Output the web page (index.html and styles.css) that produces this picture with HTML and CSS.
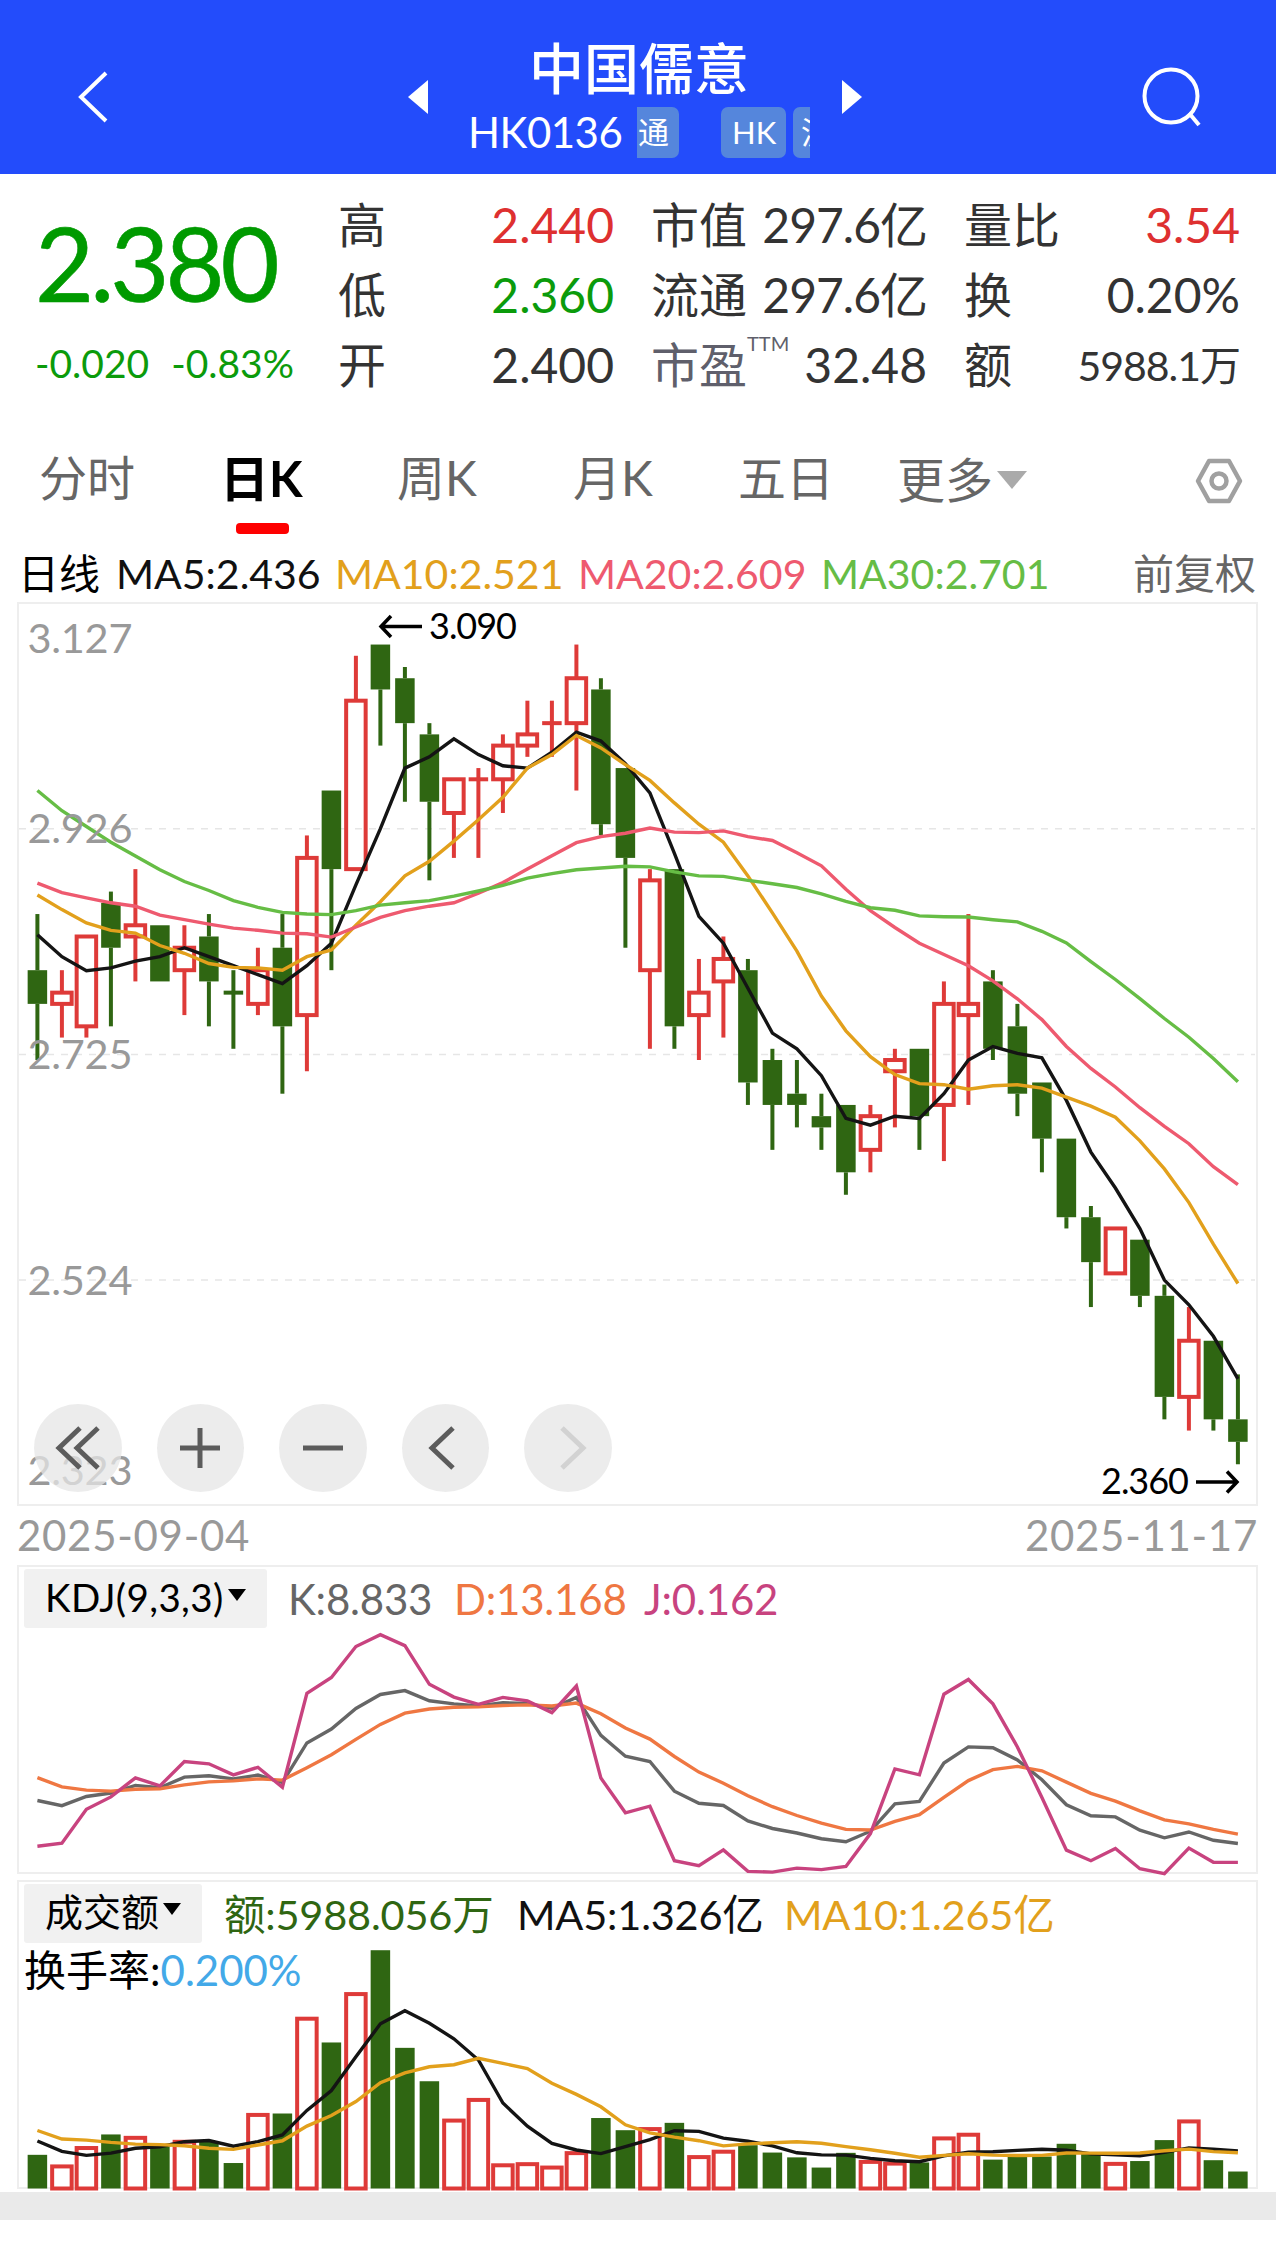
FILE: index.html
```html
<!DOCTYPE html>
<html lang="zh-CN">
<head>
    <meta charset="UTF-8">
    <meta name="viewport" content="width=device-width, initial-scale=1.0">
    <title>中国儒意 HK0136</title>
    <link rel="stylesheet" href="styles.css">
</head>
<body>
    <header class="topbar">
        <svg class="back" width="30" height="52" viewBox="0 0 30 52"><path d="M28 2 L3 26 L28 50"/></svg>
        <svg class="prev" width="20" height="34" viewBox="0 0 20 34"><path d="M20 0 L0 17 L20 34 Z"/></svg>
        <div class="stock">
            <h1>中国儒意</h1>
            <div class="code">
                <span class="num">HK0136</span>
                <div class="tags">
                    <span class="tag tag-cut">通</span>
                    <span class="tag tag-hk">HK</span>
                    <span class="tag tag-hu">沪</span>
                </div>
            </div>
        </div>
        <svg class="next" width="20" height="34" viewBox="0 0 20 34"><path d="M0 0 L20 17 L0 34 Z"/></svg>
        <svg class="search" width="60" height="60" viewBox="0 0 60 60"><circle cx="29" cy="29" r="26.5"/><path d="M47 46 L57 58"/></svg>
    </header>

    <section class="quote">
        <div class="price">
            <div class="last">2.380</div>
            <div class="change"><span>-0.020</span><span>-0.83%</span></div>
        </div>
        <dl class="stats">
            <dt>高</dt><dd class="up">2.440</dd>
            <dt>市值</dt><dd class="tight">297.6亿</dd>
            <dt>量比</dt><dd class="up">3.54</dd>
            <dt>低</dt><dd class="down">2.360</dd>
            <dt>流通</dt><dd class="tight">297.6亿</dd>
            <dt>换</dt><dd>0.20%</dd>
            <dt>开</dt><dd>2.400</dd>
            <dt class="pe">市盈<sup>TTM</sup></dt><dd>32.48</dd>
            <dt>额</dt><dd class="small">5988.1万</dd>
        </dl>
    </section>

    <nav class="tabs">
        <a>分时</a>
        <a class="active">日K</a>
        <a>周K</a>
        <a>月K</a>
        <a>五日</a>
        <a class="more">更多<i></i></a>
        <svg class="setting" width="48" height="46" viewBox="0 0 48 46"><path d="M14 3 H34 L45 23 L34 43 H14 L3 23 Z"/><circle cx="24" cy="23" r="7.5"/></svg>
    </nav>

    <div class="legend ma">
        <span>日线</span>
        <span class="ma5">MA5:2.436</span>
        <span class="ma10">MA10:2.521</span>
        <span class="ma20">MA20:2.609</span>
        <span class="ma30">MA30:2.701</span>
        <span class="adjust">前复权</span>
    </div>

    <div class="panel kline">
        <svg id="kline" width="1240" height="904"></svg>
        <div class="tools">
            <button><svg width="44" height="44" viewBox="0 0 44 44"><path d="M24 2 L3 22 L24 42 M42 2 L21 22 L42 42"/></svg></button>
            <button><svg width="44" height="44" viewBox="0 0 44 44"><path d="M22 2 V42 M2 22 H42"/></svg></button>
            <button><svg width="44" height="44" viewBox="0 0 44 44"><path d="M2 22 H42"/></svg></button>
            <button><svg width="44" height="44" viewBox="0 0 44 44"><path d="M30 2 L9 22 L30 42"/></svg></button>
            <button class="off"><svg width="44" height="44" viewBox="0 0 44 44"><path d="M16 2 L37 22 L16 42"/></svg></button>
        </div>
    </div>
    <div class="dates"><span>2025-09-04</span><span>2025-11-17</span></div>

    <div class="panel kdj">
        <div class="legend">
            <button class="pick">KDJ(9,3,3)<i></i></button>
            <span class="k">K:8.833</span>
            <span class="d">D:13.168</span>
            <span class="j">J:0.162</span>
        </div>
        <svg id="kdj" class="under" width="1240" height="309"></svg>
    </div>

    <div class="panel vol">
        <div class="legend">
            <button class="pick">成交额<i></i></button>
            <span class="amount">额:5988.056万</span>
            <span class="ma5">MA5:1.326亿</span>
            <span class="ma10">MA10:1.265亿</span>
        </div>
        <div class="turnover">换手率:<span>0.200%</span></div>
        <svg id="vol" class="under" width="1240" height="309"></svg>
    </div>
    <div class="band"></div>

    <script src="chart.js"></script>
</body>
</html>
```
FILE: styles.css
```css
*{
    margin: 0;
    padding: 0;
    box-sizing: border-box;
}
body{
    width: 1276px;
    background-color: #fff;
    color: #333;
    font-family: Lato, "Noto Sans CJK SC", sans-serif;
    font-size: 48px;
    line-height: 1;
    white-space: nowrap;
}
button{
    border: none;
    font: inherit;
    cursor: pointer;
}
svg{
    display: block;
    overflow: visible;
}

/* header */
.topbar{
    display: flex;
    align-items: center;
    height: 174px;
    padding: 20px 74px 0 78px;
    background-color: #234cfb;
    color: #fff;
}
.topbar svg{
    fill: none;
    stroke: #fff;
    stroke-width: 4;
}
.topbar .prev, .topbar .next{
    fill: #fff;
    stroke: none;
}
.prev{
    margin-left: 300px;
}
.stock{
    width: 414px;
    height: 134px;
    padding: 8px 32px 0 40px;
}
.stock h1{
    font-size: 55px;
    font-weight: 500;
    line-height: 58px;
    margin-top: 1px;
    text-align: center;
}
.code{
    display: flex;
    align-items: center;
    margin-top: 9px;
    height: 52px;
}
.code .num{
    flex: none;
    width: 169px;
    font-size: 42px;
    letter-spacing: -0.5px;
}
.tags{
    display: flex;
    flex: none;
    width: 173px;
    overflow: hidden;
}
.tag{
    flex: none;
    height: 51px;
    line-height: 50px;
    padding: 0 11px;
    border-radius: 7px;
    background-color: #5586dc;
    font-size: 31px;
}
.tag-cut{
    width: 42px;
    padding: 0 1px;
    border-radius: 0 7px 7px 0;
}
.tag-hk{
    width: 65px;
    margin: 0 7px 0 42px;
}
.tag-hu{
    padding-left: 8px;
}
.search{
    margin-left: auto;
}

/* quote */
.quote{
    display: flex;
    height: 246px;
    padding-top: 17px;
}
.price{
    width: 338px;
    padding: 21px 0 0 35px;
}
.last{
    font-size: 102px;
    letter-spacing: -4px;
    color: #009a00;
    -webkit-text-stroke: 0.6px #009a00;
}
.change{
    display: flex;
    gap: 22px;
    margin-top: 30px;
    font-size: 39px;
    color: #0b9b0b;
}
.stats{
    display: grid;
    grid-template-columns: 100px 176px 134px 179px 135px 178px;
    grid-auto-rows: 70px;
    line-height: 68px;
}
.stats dt:nth-of-type(3n+2){
    padding-left: 37px;
}
.stats dt:nth-of-type(3n){
    padding-left: 37px;
}
.stats dd{
    display: flex;
    justify-content: flex-end;
}
.up{
    color: #de3030;
}
.down{
    color: #0b9b0b;
}
.stats .tight{
    letter-spacing: -1px;
}
.stats .small{
    font-size: 41px;
    letter-spacing: -1px;
    line-height: 70px;
}
.pe{
    color: #5f5f6b;
}
.pe sup{
    font-size: 20px;
    line-height: 0;
    vertical-align: 32px;
}

/* tabs */
.tabs{
    display: grid;
    grid-template-columns: 185px 173px 176px 165px 159px 297px 48px;
    height: 120px;
    padding-left: 39px;
    line-height: 116px;
    color: #666;
}
.active{
    position: relative;
    left: -4px;
    font-weight: 700;
    font-size: 49px;
    color: #000;
}
.active::after{
    content: "";
    position: absolute;
    left: 16px;
    top: 103px;
    width: 53px;
    height: 11px;
    border-radius: 4px;
    background-color: #fe0000;
}
.more{
    display: flex;
    align-items: center;
    gap: 4px;
}
.more i{
    border: 15px solid transparent;
    border-top: 18px solid #aaa;
    border-bottom: none;
}
.setting{
    margin: 38px 0 0 1px;
    fill: none;
    stroke: #a0a0a0;
    stroke-width: 4.5;
    stroke-linejoin: round;
}

/* legends */
.legend{
    display: grid;
    font-size: 42px;
}
.ma{
    grid-template-columns: 98px 219px 243px 243px 300px auto;
    height: 62px;
    padding-left: 18px;
    line-height: 68px;
    color: #000;
    font-size: 41px;
}
.adjust{
    color: #666;
    padding-left: 12px;
}
.ma5{ color: #111; }
.ma10{ color: #e2a01c; }
.ma20{ color: #ee5a6f; }
.ma30{ color: #66bd45; }
.k{ color: #666; }
.d{ color: #ef7742; }
.j{ color: #c8437f; }
.amount{ color: #2f6612; }

.panel{
    position: relative;
    width: 1241px;
    margin-left: 17px;
    box-shadow: inset 0 0 0 2px #eee;
}
.tools{
    position: absolute;
    left: 17px;
    bottom: 14px;
    display: flex;
    gap: 35px;
}
.tools button{
    display: flex;
    align-items: center;
    justify-content: center;
    width: 87.5px;
    height: 88px;
    border-radius: 50%;
    background-color: rgba(230, 230, 230, 0.75);
}
.tools path{
    fill: none;
    stroke: #5c5c5c;
    stroke-width: 5;
}
.tools .off path{
    stroke: #d2d2d2;
}
.dates{
    display: flex;
    justify-content: space-between;
    height: 59px;
    padding: 0 18px 0 17px;
    font-size: 42px;
    line-height: 59px;
    letter-spacing: 0.7px;
    color: #999;
}
.kdj, .vol{
    height: 309px;
    padding: 4px 0 0 7px;
}
.kdj{
    margin-bottom: 6px;
}
.kdj .legend{
    grid-template-columns: 264px 166px 190px auto;
    line-height: 61px;
    letter-spacing: -0.2px;
}
.vol .legend{
    grid-template-columns: 200px 293px 267px auto;
    line-height: 61px;
    font-size: 41.5px;
    letter-spacing: -0.2px;
}
.pick{
    display: flex;
    align-items: center;
    justify-content: space-between;
    width: 243px;
    height: 59px;
    padding: 0 21px 2px 21px;
    border-radius: 3px;
    background-color: #f1f1f1;
    color: #000;
    font-size: 38.5px;
    letter-spacing: 0.4px;
}
.vol .pick{
    width: 178px;
    font-size: 38px;
    letter-spacing: 0;
    padding-bottom: 4px;
}
.pick i{
    margin-bottom: 6px;
    border: 9px solid transparent;
    border-top: 12px solid #000;
    border-bottom: none;
}
.turnover{
    font-size: 42px;
    line-height: 50px;
    color: #000;
}
.turnover span{
    color: #43a9e8;
}
.under{
    position: absolute;
    left: 0;
    top: 0;
    pointer-events: none;
}
.band{
    height: 28px;
    margin-top: 3px;
    background-color: #eaeaea;
}

/* chart shapes */
.grid{
    stroke: #e6e6e6;
    stroke-width: 1.5;
    stroke-dasharray: 7 7;
}
.rise{
    fill: none;
    stroke: #de3a38;
    stroke-width: 4;
}
.fall{
    fill: #2f6612;
    stroke: none;
}
.wick-fall{
    stroke: #2f6612;
    stroke-width: 4;
}
.curve{
    fill: none;
    stroke-width: 3.4;
}
.axis{
    fill: #999;
    font-size: 41.5px;
}
.mark{
    fill: #000;
    font-size: 36px;
}
.arrow{
    fill: none;
    stroke: #000;
    stroke-width: 3.5;
}
```
FILE: chart.js
```js
// open, close, high, low, amount (million)
const days = [
    [2.80, 2.77, 2.85, 2.72, 119], [2.77, 2.78, 2.80, 2.74, 78], [2.75, 2.83, 2.83, 2.74, 143],
    [2.86, 2.82, 2.87, 2.75, 191], [2.83, 2.84, 2.89, 2.79, 179], [2.84, 2.79, 2.84, 2.79, 148],
    [2.80, 2.82, 2.84, 2.76, 165], [2.83, 2.79, 2.85, 2.75, 165], [2.78, 2.78, 2.80, 2.73, 90, 'fall'],
    [2.77, 2.80, 2.82, 2.76, 260], [2.82, 2.75, 2.85, 2.69, 265], [2.76, 2.90, 2.92, 2.71, 600],
    [2.96, 2.89, 2.96, 2.80, 516], [2.89, 3.04, 3.08, 2.89, 687], [3.09, 3.05, 3.09, 3.00, 842],
    [3.06, 3.02, 3.07, 2.95, 497], [3.01, 2.95, 3.02, 2.88, 379], [2.94, 2.97, 2.97, 2.90, 240],
    [2.97, 2.97, 2.98, 2.90, 313], [2.97, 3.00, 3.01, 2.94, 82], [3.00, 3.01, 3.04, 2.99, 86],
    [3.02, 3.02, 3.04, 2.99, 74], [3.02, 3.06, 3.09, 2.96, 125], [3.05, 2.93, 3.06, 2.92, 249],
    [2.98, 2.90, 2.98, 2.82, 206], [2.80, 2.88, 2.89, 2.73, 210], [2.89, 2.75, 2.89, 2.73, 232],
    [2.76, 2.78, 2.81, 2.72, 111], [2.79, 2.81, 2.83, 2.74, 130], [2.80, 2.70, 2.81, 2.68, 153],
    [2.72, 2.68, 2.73, 2.64, 127], [2.69, 2.68, 2.72, 2.66, 110], [2.67, 2.66, 2.69, 2.64, 74],
    [2.68, 2.62, 2.68, 2.60, 126], [2.64, 2.67, 2.68, 2.62, 94], [2.71, 2.72, 2.73, 2.66, 88],
    [2.73, 2.67, 2.73, 2.64, 92], [2.68, 2.77, 2.79, 2.63, 177], [2.76, 2.77, 2.85, 2.68, 190],
    [2.79, 2.73, 2.80, 2.72, 102], [2.75, 2.69, 2.77, 2.67, 113], [2.70, 2.65, 2.70, 2.62, 113],
    [2.65, 2.58, 2.65, 2.57, 158], [2.58, 2.54, 2.59, 2.50, 125], [2.53, 2.57, 2.57, 2.53, 87],
    [2.56, 2.51, 2.56, 2.50, 97], [2.51, 2.42, 2.52, 2.40, 171], [2.42, 2.47, 2.50, 2.39, 237],
    [2.47, 2.40, 2.47, 2.39, 100], [2.40, 2.38, 2.44, 2.36, 60]
]
const STEP = 24.5
const BODY = 19.5
const close = days.map(d => d[1])
const amount = days.map(d => d[4])
const px = i => 20.4 + i * STEP
const isRise = d => d[5] !== 'fall' && d[1] >= d[0]

// head = averages of the first days, whose window starts before the chart
function average(list, n, head) {
    return list.map((v, i) => i < head.length ? head[i]
        : list.slice(i - n + 1, i + 1).reduce((a, b) => a + b) / n)
}
function curve(list, y, color) {
    const points = list.map((v, i) => px(i).toFixed(1) + ',' + y(v).toFixed(1)).join(' ')
    return `<polyline class="curve" stroke="${color}" points="${points}"/>`
}
function vline(cls, x, y1, y2) {
    return `<line class="${cls}" x1="${x}" x2="${x}" y1="${y1}" y2="${y2}"/>`
}

function drawKline() {
    const y = p => 1 + (3.127 - p) * 1122.9
    let s = ''
    for (const p of [2.926, 2.725, 2.524]) {
        s += `<line class="grid" x1="2" x2="1238" y1="${y(p)}" y2="${y(p)}"/>`
    }
    days.forEach((d, i) => {
        const x = px(i)
        const top = y(Math.max(d[0], d[1]))
        const bottom = y(Math.min(d[0], d[1]))
        const cls = isRise(d) ? 'rise' : 'wick-fall'
        s += vline(cls, x, y(d[2]), top) + vline(cls, x, bottom, y(d[3]))
        if (bottom - top < 1) {
            s += `<line class="${cls}" x1="${x - BODY / 2}" x2="${x + BODY / 2}" y1="${top}" y2="${top}"/>`
        } else {
            s += `<rect class="${isRise(d) ? 'rise' : 'fall'}" x="${x - BODY / 2}" y="${top}" width="${BODY}" height="${bottom - top}"/>`
        }
    })
    s += curve(average(close, 5, [2.8316, 2.812, 2.7995, 2.802]), y, '#141414')
    s += curve(average(close, 10, [2.867, 2.854, 2.842, 2.8354, 2.833, 2.822, 2.815, 2.806, 2.8025]), y, '#e2a01c')
    s += curve(average(close, 20, [2.8775, 2.869, 2.8645, 2.86, 2.857, 2.849, 2.845, 2.841, 2.8375, 2.8355,
        2.833, 2.8325, 2.8295, 2.8385, 2.847, 2.853, 2.857, 2.86, 2.8685]), y, '#ee5a6f')
    s += curve(average(close, 30, [2.96, 2.942, 2.928, 2.914, 2.9016, 2.8895, 2.879, 2.871, 2.862, 2.856,
        2.8515, 2.85, 2.8495, 2.853, 2.858, 2.86, 2.862, 2.866, 2.8705, 2.8755,
        2.882, 2.886, 2.8895, 2.891, 2.8925, 2.892, 2.8875, 2.884, 2.8835]), y, '#66bd45')

    const labels = [['3.127', 50.5], ['2.926', 241], ['2.725', 467], ['2.524', 692.5], ['2.323', 883]]
    for (const [text, ty] of labels) {
        s += `<text class="axis" x="10.5" y="${ty}" textLength="105">${text}</text>`
    }
    s += '<path class="arrow" d="M405 24.5 H364 M374 14 L364 24.5 L374 35"/>'
    s += '<text class="mark" x="412" y="36.5" textLength="88">3.090</text>'
    s += '<path class="arrow" d="M1179 880 H1220 M1210 869.5 L1220 880 L1210 890.5"/>'
    s += '<text class="mark" x="1084" y="892" textLength="88">2.360</text>'
    document.getElementById('kline').innerHTML = s
}

function drawKdj() {
    const y = v => 297.8 - v * 2.18
    const k = [28.6, 26.2, 30.4, 32, 35.5, 34.4, 39.3, 39.9, 38.5]
    const d = [39.1]
    for (let i = k.length; i < days.length; i++) {
        const win = days.slice(i - 8, i + 1)
        const low = Math.min(...win.map(w => w[3]))
        const high = Math.max(...win.map(w => w[2]))
        k.push(k[i - 1] * 2 / 3 + (close[i] - low) / (high - low) * 100 / 3)
    }
    for (let i = 1; i < k.length; i++) {
        d.push(d[i - 1] * 2 / 3 + k[i] / 3)
    }
    const j = k.map((v, i) => 3 * v - 2 * d[i])
    document.getElementById('kdj').innerHTML =
        curve(k, y, '#666') + curve(d, y, '#ef7742') + curve(j, y, '#c8437f')
}

function drawVol() {
    const base = 308.5
    const y = v => base - v * 0.283
    let s = ''
    days.forEach((d, i) => {
        s += `<rect class="${isRise(d) ? 'rise' : 'fall'}" x="${px(i) - BODY / 2}" y="${y(d[4])}" width="${BODY}" height="${base - y(d[4])}"/>`
    })
    s += curve(average(amount, 5, [168, 131, 117, 125]), y, '#141414')
    s += curve(average(amount, 10, [205, 175, 171, 163, 157, 155, 151, 142, 138]), y, '#e2a01c')
    document.getElementById('vol').innerHTML = s
}

drawKline()
drawKdj()
drawVol()
```
